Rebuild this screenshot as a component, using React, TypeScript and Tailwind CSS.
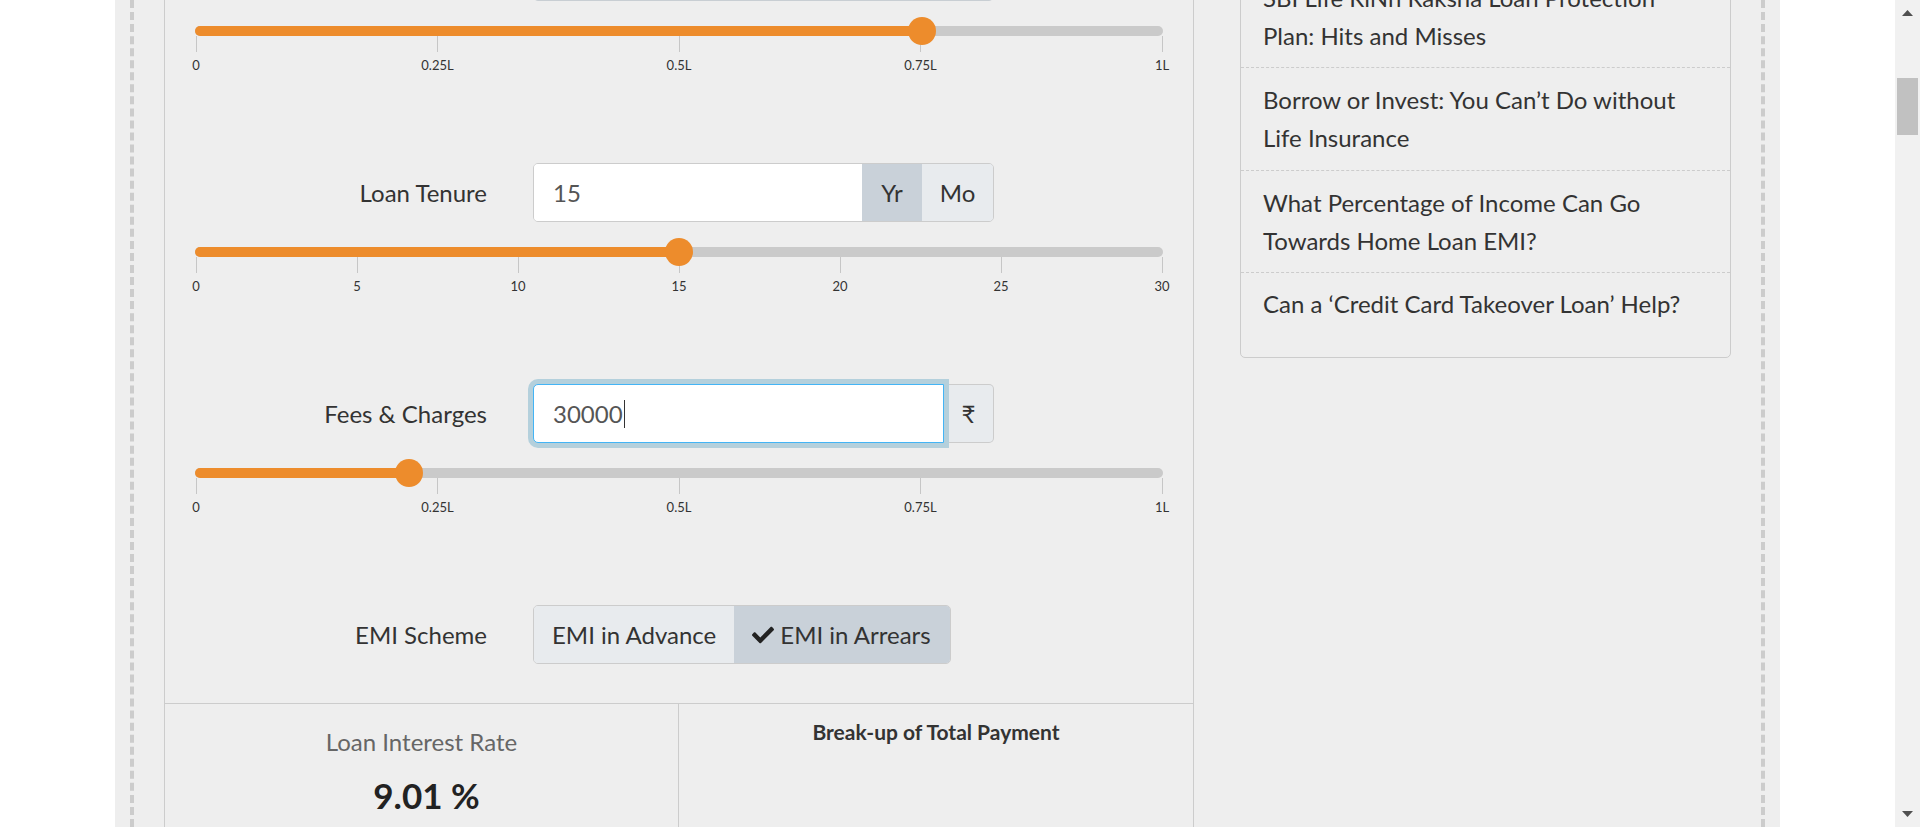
import React from "react";
import { FaCheck } from "react-icons/fa";

type SliderProps = {
  ticks: string[];
  value: number;
};

// orange range slider with pips underneath
const Slider: React.FC<SliderProps> = ({ ticks, value }) => {
  const pos = `calc(1px + ${value} * (100% - 2px))`;
  return (
    <div className="mt-[25px]">
      <div className="relative mx-[30px] h-[10px] rounded-full bg-[#cacaca]">
        <div
          className="absolute inset-y-0 left-0 rounded-l-full bg-[#ed8c2c]"
          style={{ width: pos }}
        />
        <div
          className="absolute top-1/2 h-[28px] w-[28px] -translate-x-1/2 -translate-y-1/2 rounded-full bg-[#ed8c2c]"
          style={{ left: pos }}
        />
      </div>
      <div className="mx-[31px] flex justify-between">
        {ticks.map((t) => (
          <div key={t} className="flex w-0 flex-col items-center">
            <div className="h-[16px] w-px shrink-0 bg-[#c6c6c6]" />
            <span className="mt-[5px] whitespace-nowrap text-[13px] leading-[16px] text-[#333]">
              {t}
            </span>
          </div>
        ))}
      </div>
    </div>
  );
};

const Field: React.FC<{ label: string; children: React.ReactNode }> = ({
  label,
  children,
}) => (
  <div className="flex h-[59px] items-center">
    <div className="w-[322px] text-right text-[24px] text-[#333]">{label}</div>
    <div className="ml-[46px] flex h-full">{children}</div>
  </div>
);

const lakhTicks = ["0", "0.25L", "0.5L", "0.75L", "1L"];
const yearTicks = ["0", "5", "10", "15", "20", "25", "30"];

const articles = [
  "SBI Life RiNn Raksha Loan Protection Plan: Hits and Misses",
  "Borrow or Invest: You Can\u2019t Do without Life Insurance",
  "What Percentage of Income Can Go Towards Home Loan EMI?",
  "Can a \u2018Credit Card Takeover Loan\u2019 Help?",
];

const App: React.FC = () => {
  return (
    <div className="flex h-[827px] w-full overflow-hidden bg-white font-[Lato,sans-serif]">
      <div className="flex flex-1 justify-center">
        <div className="flex h-full w-[1665px] bg-[#eeeeee] px-[15px]">
          <div className="flex flex-1 items-start gap-[46px] border-x-4 border-dashed border-[#cccccc] px-[30px]">
            {/* calculator */}
            <div className="-mt-[58px] w-[1030px] shrink-0 border-x border-[#cccccc]">
              <div className="h-[221px]">
                <Field label="EMI">
                  <div className="flex w-[461px] overflow-hidden rounded-[5px] border border-[#c8ced3]">
                    <div className="flex flex-1 items-center bg-white pl-[19px] text-[24px] text-[#555]">
                      75,000
                    </div>
                    <div className="flex w-[50px] items-center justify-center bg-[#e8ebee] text-[24px] text-[#333]">
                      ₹
                    </div>
                  </div>
                </Field>
                <Slider ticks={lakhTicks} value={0.752} />
              </div>

              <div className="h-[221px]">
                <Field label="Loan Tenure">
                  <div className="flex w-[461px] overflow-hidden rounded-[5px] border border-[#cccccc]">
                    <div className="flex flex-1 items-center bg-white pl-[19px] text-[24px] text-[#555]">
                      15
                    </div>
                    <div className="flex w-[60px] items-center justify-center bg-[#c9d1d9] text-[24px] text-[#333]">
                      Yr
                    </div>
                    <div className="flex w-[71px] items-center justify-center bg-[#e8ebee] text-[24px] text-[#333]">
                      Mo
                    </div>
                  </div>
                </Field>
                <Slider ticks={yearTicks} value={0.5} />
              </div>

              <div className="h-[221px]">
                <Field label="Fees & Charges">
                  <div className="flex w-[461px]">
                    <div className="relative z-10 flex flex-1 items-center rounded-l-[5px] border border-[#43b4f5] bg-white pl-[19px] text-[24px] text-[#555] shadow-[0_0_0_5px_#b4d0dc]">
                      30000
                      <span className="ml-px inline-block h-[28px] w-px bg-[#333]" />
                    </div>
                    <div className="flex w-[50px] items-center justify-center rounded-r-[5px] border-y border-r border-[#cccccc] bg-[#e8ebee] text-[24px] text-[#333]">
                      ₹
                    </div>
                  </div>
                </Field>
                <Slider ticks={lakhTicks} value={0.221} />
              </div>

              <div className="pb-[39px]">
                <Field label="EMI Scheme">
                  <div className="flex overflow-hidden rounded-[5px] border border-[#cccccc] text-[24px] text-[#333]">
                    <div className="flex items-center bg-[#e8ebee] px-[18px]">EMI in Advance</div>
                    <div className="flex items-center gap-[6px] bg-[#c9d1d9] pl-[18px] pr-[19px]">
                      <FaCheck className="h-[22px] w-[22px] text-[#222]" />
                      EMI in Arrears
                    </div>
                  </div>
                </Field>
              </div>

              <div className="grid h-[200px] grid-cols-2 border-t border-[#cccccc]">
                <div className="border-r border-[#cccccc] pt-[23px] text-center">
                  <div className="text-[24px] leading-[30px] text-[#666]">Loan Interest Rate</div>
                  <div className="mt-[16px] pl-[10px] text-[35px] font-bold leading-[44px] text-[#222]">
                    9.01 %
                  </div>
                </div>
                <div className="pt-[16px] text-center text-[21px] font-bold leading-[24px] text-[#333]">
                  Break-up of Total Payment
                </div>
              </div>
            </div>

            {/* related articles */}
            <div className="-mt-[35px] w-[491px] shrink-0 rounded-b-[5px] border border-[#cccccc]">
              {articles.map((a, i) => (
                <div
                  key={a}
                  className={
                    i === articles.length - 1
                      ? "px-[22px] pt-[12px] pb-[34px] text-[24px] leading-[37.7px] text-[#333]"
                      : "border-b border-dashed border-[#cccccc] px-[22px] py-[13px] text-[24px] leading-[37.7px] text-[#333]"
                  }
                >
                  {a}
                </div>
              ))}
            </div>
          </div>
        </div>
      </div>

      {/* scrollbar */}
      <div className="flex h-full w-[25px] shrink-0 flex-col items-center bg-[#f1f1f1]">
        <div className="flex h-[25px] items-center">
          <svg width="11" height="6" viewBox="0 0 11 6">
            <polygon points="5.5,0 11,6 0,6" fill="#505050" />
          </svg>
        </div>
        <div className="mt-[53px] h-[57px] w-[21px] bg-[#c1c1c1]" />
        <div className="mt-auto flex h-[26px] items-center">
          <svg width="11" height="6" viewBox="0 0 11 6">
            <polygon points="0,0 11,0 5.5,6" fill="#505050" />
          </svg>
        </div>
      </div>
    </div>
  );
};

export default App;
